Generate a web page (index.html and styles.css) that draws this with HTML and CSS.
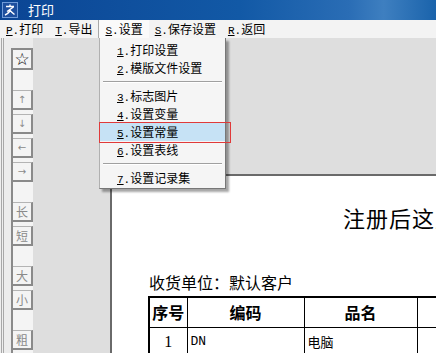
FILE: index.html
```html
<!DOCTYPE html>
<html lang="zh-CN">
<head>
    <meta charset="UTF-8">
    <title>打印</title>
    <link rel="stylesheet" href="styles.css">
</head>
<body>
    <div class="window">
        <div class="titlebar">
            <svg class="app-icon" width="16" height="16" viewBox="0 0 16 16">
                <rect x="0.5" y="0.5" width="15" height="15" fill="#1d4f9e" stroke="#6f9bd8"/>
                <path d="M4 4.5 H12 M8 2.5 V4.5 M11.5 5 L5 9.5 M7.5 8 C9 9.5 10.5 11 12.5 12.5 M3 13 C5 12 6.5 11 8 9" stroke="#fff" stroke-width="1.4" fill="none"/>
            </svg>
            <span class="title">打印</span>
        </div>
        <div class="menubar">
            <span class="menu-item"><u class="key">P</u><span class="key">.</span>打印</span>
            <span class="menu-item"><u class="key">T</u><span class="key">.</span>导出</span>
            <span class="menu-item open"><u class="key">S</u><span class="key">.</span>设置</span>
            <span class="menu-item"><u class="key">S</u><span class="key">.</span>保存设置</span>
            <span class="menu-item"><u class="key">R</u><span class="key">.</span>返回</span>
        </div>
        <div class="workspace">
            <div class="side">
                <div class="toolbar">
                    <div class="tool star">☆</div>
                    <div class="tool arrow sep">↑</div>
                    <div class="tool arrow">↓</div>
                    <div class="tool arrow">←</div>
                    <div class="tool arrow">→</div>
                    <div class="tool sep">长</div>
                    <div class="tool">短</div>
                    <div class="tool sep">大</div>
                    <div class="tool">小</div>
                    <div class="tool sep">粗</div>
                </div>
            </div>
            <div class="canvas">
                <div class="page">
                    <div class="doc-title">注册后这里显示公司名称</div>
                    <div class="doc-line">收货单位：默认客户</div>
                    <table class="doc-table">
                        <thead>
                            <tr>
                                <th class="col-no">序号</th>
                                <th class="col-code">编码</th>
                                <th class="col-name">品名</th>
                                <th class="col-spec">规格</th>
                            </tr>
                        </thead>
                        <tbody>
                            <tr>
                                <td class="num">1</td>
                                <td class="code">DN</td>
                                <td>电脑</td>
                                <td></td>
                            </tr>
                        </tbody>
                    </table>
                </div>
            </div>
        </div>

        <div class="dropdown">
            <div class="dropdown-item"><u class="key">1</u><span class="key">.</span>打印设置</div>
            <div class="dropdown-item"><u class="key">2</u><span class="key">.</span>模版文件设置</div>
            <div class="dropdown-sep"></div>
            <div class="dropdown-item"><u class="key">3</u><span class="key">.</span>标志图片</div>
            <div class="dropdown-item"><u class="key">4</u><span class="key">.</span>设置变量</div>
            <div class="dropdown-item active"><u class="key">5</u><span class="key">.</span>设置常量</div>
            <div class="dropdown-item"><u class="key">6</u><span class="key">.</span>设置表线</div>
            <div class="dropdown-sep"></div>
            <div class="dropdown-item"><u class="key">7</u><span class="key">.</span>设置记录集</div>
        </div>
        <div class="callout"></div>
    </div>
</body>
</html>
```

FILE: styles.css
```css
* {
	box-sizing: border-box;
}
html, body {
	margin: 0;
	height: 100%;
	overflow: hidden;
}
body {
	font-family: "Noto Sans CJK SC", sans-serif;
	font-size: 12px;
	color: #000;
	background: #dedede;
}
.window {
	position: relative;
	width: 436px;
	height: 353px;
	display: flex;
	flex-direction: column;
	overflow: hidden;
}
.titlebar {
	height: 20px;
	flex: none;
	display: flex;
	align-items: center;
	color: #fff;
	background: linear-gradient(to right, #0b4594 0%, #1259a6 55%, #2a6db5 80%, #3e7fc0 88%, #1a63ab 100%);
}
.app-icon {
	margin: 0 10px 0 2px;
}
.title {
	font-size: 13px;
	line-height: 20px;
}
.menubar {
	height: 18px;
	flex: none;
	display: flex;
	background: #f3f3f3;
}
.menu-item {
	padding: 0 6px;
	line-height: 18px;
	white-space: nowrap;
}
.menu-item.open {
	background: #fafafa;
	border-left: 1px solid #a8a8a8;
}
.key {
	font-family: "Liberation Mono", monospace;
	font-size: 11px;
}
.workspace {
	flex: 1;
	display: flex;
	min-height: 0;
}
.side {
	width: 33px;
	flex: none;
	background: linear-gradient(to right, #eeeeee 0 1px, #a8a8a8 1px 2px, #eeeeee 2px 3px, #a8a8a8 3px 4px, #ececec 4px);
}
.toolbar {
	margin: 10px 0 0 11px;
	height: 100%;
	background: #f4f4f4;
	border-left: 2px solid #8a8a8a;
}
.tool {
	height: 20px;
	margin-top: 4px;
	display: flex;
	align-items: center;
	justify-content: center;
	color: #8a8a8a;
	font-size: 12px;
	border-top: 1px solid #b4b4b4;
	border-right: 2px solid #8a8a8a;
	border-bottom: 2px solid #8a8a8a;
}
.tool.sep {
	margin-top: 20px;
}
.tool.star {
	height: 22px;
	margin-top: 0;
	color: #000;
	font-family: "DejaVu Sans", sans-serif;
	font-size: 17px;
	border-top: 2px solid #8a8a8a;
}
.tool.arrow {
	font-family: "DejaVu Sans", sans-serif;
	font-size: 10px;
}
.canvas {
	flex: 1;
	background: #dedede;
	padding: 136px 0 0 77px;
}
.page {
	width: 700px;
	height: 400px;
	background: #fff;
	border-left: 2px solid #6a6a6a;
	border-top: 2px solid #6a6a6a;
}
.doc-title {
	margin-top: 29px;
	padding-left: 231px;
	font-size: 22px;
	line-height: 24px;
	letter-spacing: 1px;
	white-space: nowrap;
}
.doc-line {
	margin-top: 43px;
	padding-left: 37px;
	font-size: 16px;
	line-height: 20px;
}
.doc-table {
	margin: 4px 0 0 36px;
	border-collapse: collapse;
	border: 2px solid #000;
}
.doc-table th, .doc-table td {
	border: 1px solid #000;
	height: 30px;
	padding: 0 3px;
	text-align: left;
	font-size: 13px;
	white-space: nowrap;
}
.doc-table th {
	padding: 0 1px;
	text-align: center;
	font-size: 16px;
	font-weight: bold;
}
.doc-table td.num {
	text-align: center;
	font-family: "Liberation Serif", serif;
	font-size: 16px;
}
.doc-table td.code {
	font-family: "Liberation Mono", monospace;
	font-size: 13px;
}
.col-no { width: 38px; }
.col-code { width: 117px; }
.col-name { width: 113px; }
.col-spec { width: 120px; }
.dropdown {
	position: absolute;
	left: 99px;
	top: 38px;
	width: 127px;
	padding: 3px 0 1px;
	background: #f5f5f5;
	border-left: 1px solid #b0b0b0;
	border-right: 1px solid #777;
	border-bottom: 1px solid #777;
	box-shadow: 3px 3px 2px rgba(0, 0, 0, 0.35);
}
.dropdown-item {
	height: 18px;
	line-height: 18px;
	padding-left: 17px;
	white-space: nowrap;
}
.dropdown-item.active {
	background: #c6e2f5;
}
.dropdown-sep {
	height: 10px;
	padding: 4px 3px 0;
}
.dropdown-sep::before {
	content: "";
	display: block;
	border-top: 1px solid #a0a0a0;
	border-bottom: 1px solid #fff;
}
.callout {
	position: absolute;
	left: 99px;
	top: 122px;
	width: 132px;
	height: 21px;
	border: 1px solid #e03a3a;
}
```
